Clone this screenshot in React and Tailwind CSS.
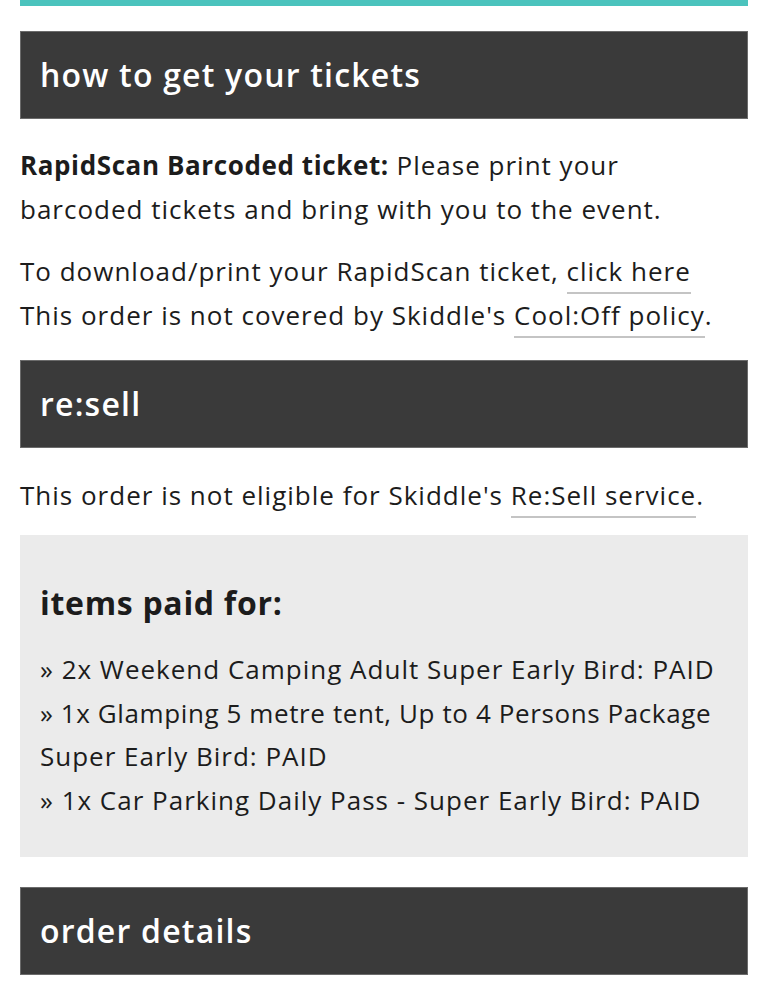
export default function App() {
  const font = { fontFamily: '"Open Sans", "Noto Sans", sans-serif' };
  const Header = ({ children, className = "" }) => (
    <div className={`h-[88px] bg-[#3a3a3a] border border-[#6b6b6b] flex items-center px-[19px] text-white text-[32px] font-semibold tracking-[1.2px] ${className}`}>
      {children}
    </div>
  );
  const Link = ({ children }) => (
    <span className="border-b-2 border-[#c4c4c4] pb-[3px]">{children}</span>
  );
  return (
    <div className="bg-white min-h-[988px] px-[20px] text-[#1c1c1c] text-[26px] leading-[44px] tracking-[1px]" style={font}>
      <div className="h-[6px] bg-[#4bc3bd]" />
      <Header className="mt-[25px]">how to get your tickets</Header>
      <p className="mt-[24px]">
        <span className="font-bold tracking-[0.6px]">RapidScan Barcoded ticket:</span> Please print your barcoded tickets and bring with you to the event.
      </p>
      <p className="mt-[18px]">
        To download/print your RapidScan ticket, <Link>click here</Link>
        <br />
        This order is not covered by Skiddle's <Link>Cool:Off policy</Link>.
      </p>
      <Header className="mt-[23px]">re:sell</Header>
      <p className="mt-[25px]">
        This order is not eligible for Skiddle's <Link>Re:Sell service</Link>.
      </p>
      <div className="mt-[18px] bg-[#ebebeb] px-[20px] pt-[46px] pb-[35px]">
        <h3 className="text-[32px] font-bold leading-[44px] tracking-[0.7px]">items paid for:</h3>
        <div className="mt-[23px] leading-[43.5px]">
          <div>» 2x Weekend Camping Adult Super Early Bird: PAID</div>
          <div>
            <span className="whitespace-nowrap tracking-[0.6px]">» 1x Glamping 5 metre tent, Up to 4 Persons Package</span>
            <br />
            Super Early Bird: PAID
          </div>
          <div>» 1x Car Parking Daily Pass - Super Early Bird: PAID</div>
        </div>
      </div>
      <Header className="mt-[30px]">order details</Header>
    </div>
  );
}
